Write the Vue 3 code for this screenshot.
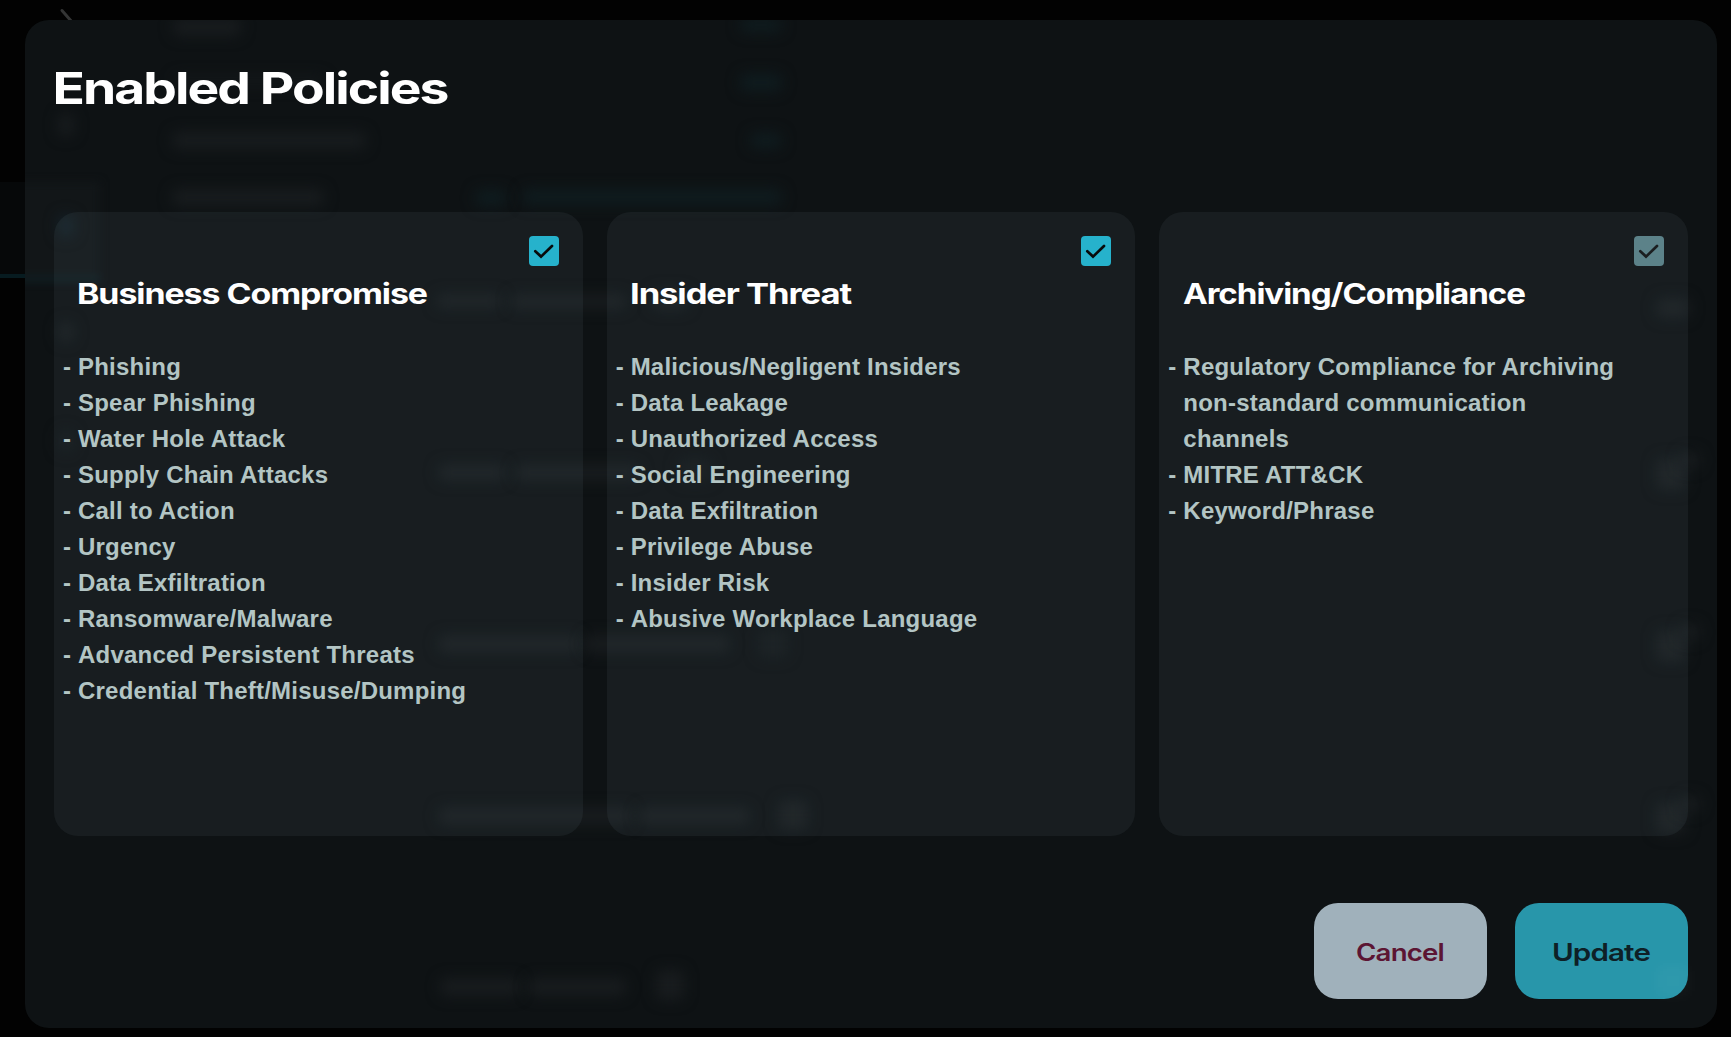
<script setup>
import { ref } from 'vue'

const policies = ref([
  {
    title: 'Business Compromise', x: -1, width: 350, enabled: true, locked: false,
    items: ['Phishing', 'Spear Phishing', 'Water Hole Attack', 'Supply Chain Attacks', 'Call to Action', 'Urgency',
      'Data Exfiltration', 'Ransomware/Malware', 'Advanced Persistent Threats', 'Credential Theft/Misuse/Dumping'],
  },
  {
    title: 'Insider Threat', x: -1, width: 221, enabled: true, locked: false,
    items: ['Malicious/Negligent Insiders', 'Data Leakage', 'Unauthorized Access', 'Social Engineering',
      'Data Exfiltration', 'Privilege Abuse', 'Insider Risk', 'Abusive Workplace Language'],
  },
  {
    title: 'Archiving/Compliance', x: 0, width: 342, enabled: true, locked: true,
    items: ['Regulatory Compliance for Archiving non-standard communication channels', 'MITRE ATT&CK', 'Keyword/Phrase'],
  },
])

// Dimmed page content behind the dialog: [x, y, width, height, tone]
const ghosts = [
  [173, 18, 68, 18, 'grey'], [174, 76, 150, 10, 'dim'],
  [172, 132, 194, 17, 'grey'], [172, 189, 152, 17, 'grey'],
  [740, 18, 42, 14, 'teal'], [740, 74, 42, 17, 'teal'], [750, 133, 32, 15, 'teal'],
  [475, 190, 32, 16, 'teal'], [522, 189, 260, 16, 'teal'],
  [58, 114, 16, 22, 'grey'], [58, 215, 16, 22, 'blue'], [58, 322, 16, 20, 'grey'], [58, 430, 16, 22, 'dim'],
  [436, 294, 66, 14, 'grey'], [510, 294, 117, 15, 'grey'], [652, 290, 36, 20, 'grey'],
  [438, 464, 68, 17, 'grey'], [515, 464, 125, 17, 'grey'], [678, 458, 34, 24, 'dim'],
  [438, 635, 142, 18, 'grey'], [584, 635, 146, 18, 'grey'], [758, 630, 30, 28, 'dim'],
  [438, 807, 194, 18, 'grey'], [638, 807, 112, 18, 'grey'], [778, 800, 30, 30, 'grey'],
  [440, 978, 80, 18, 'grey'], [528, 978, 98, 18, 'grey'], [656, 970, 28, 30, 'grey'],
  [1656, 298, 34, 20, 'grey'],
  [1656, 458, 30, 32, 'grey'], [1680, 452, 20, 16, 'grey'],
  [1656, 630, 30, 32, 'grey'], [1680, 624, 20, 16, 'grey'],
  [1656, 802, 30, 32, 'grey'], [1680, 796, 20, 16, 'grey'],
]
</script>

<template>
  <div class="page">
    <div class="backdrop" aria-hidden="true">
      <div class="nav-active"></div>
      <svg class="chevron" width="20" height="14" viewBox="0 0 20 14"><path d="M3 2.5 L13 14" /></svg>
    </div>
    <section class="dialog">
      <div class="shade" aria-hidden="true">
        <div class="shade-nav"></div>
        <i v-for="(g, i) in ghosts" :key="i" :class="g[4]"
          :style="{ left: g[0] - 25 + 'px', top: g[1] - 20 + 'px', width: g[2] + 'px', height: g[3] + 'px' }"></i>
      </div>
      <h1><svg width="400" height="60"><text x="-1.5" y="42" textLength="395" lengthAdjust="spacingAndGlyphs">Enabled Policies</text></svg></h1>
      <div class="cards">
        <article v-for="p in policies" :key="p.title" class="card">
          <button class="check" :class="{ locked: p.locked }" :disabled="p.locked" @click="p.enabled = !p.enabled">
            <svg v-if="p.enabled" width="30" height="30" viewBox="0 0 30 30"><path d="M6.3 15.2 L12 20.6 L23 10" /></svg>
          </button>
          <h2><svg width="440" height="40"><text :x="p.x" y="30" :textLength="p.width" lengthAdjust="spacingAndGlyphs">{{ p.title }}</text></svg></h2>
          <ul>
            <li v-for="t in p.items" :key="t">{{ t }}</li>
          </ul>
        </article>
      </div>
      <footer>
        <button class="action cancel"><svg width="90" height="30"><text x="0" y="25" textLength="88" lengthAdjust="spacingAndGlyphs">Cancel</text></svg></button>
        <button class="action update"><svg width="99" height="30"><text x="0" y="25" textLength="98" lengthAdjust="spacingAndGlyphs">Update</text></svg></button>
      </footer>
      <i class="ghost-edge"></i>
    </section>
  </div>
</template>

<style>
html, body { margin: 0; background: #020202; }
</style>

<style scoped>
.page {
  position: relative;
  box-sizing: border-box;
  width: 1731px;
  height: 1037px;
  padding: 20px 14px 9px 25px;
  overflow: hidden;
  background: #020202;
  font-family: "Liberation Sans", Arial, sans-serif;
}
.backdrop { position: absolute; inset: 0; }
.nav-active {
  position: absolute;
  left: 0;
  top: 182px;
  width: 100px;
  height: 92px;
  background: #060809;
  border-bottom: 4px solid #071b20;
}
.chevron { position: absolute; left: 59px; top: 8px; }
.chevron path { fill: none; stroke: #343535; stroke-width: 3; stroke-linecap: round; }
.dialog {
  position: relative;
  box-sizing: border-box;
  height: 1008px;
  padding: 42px 29px 29px;
  border-radius: 24px;
  background: #0e1214;
  overflow: hidden;
  display: flex;
  flex-direction: column;
}
.shade { position: absolute; inset: 0; }
.shade i { position: absolute; border-radius: 6px; filter: blur(7px); }
.shade .grey { background: #181c1e; }
.shade .dim { background: #14181a; }
.shade .teal { background: #0f1c1f; }
.shade .blue { background: #142129; }
.shade-nav {
  position: absolute;
  left: -10px;
  top: 162px;
  width: 85px;
  height: 95px;
  background: #121618;
  border-bottom: 4px solid #10252a;
  filter: blur(4px);
}
.ghost-edge {
  position: absolute;
  right: 28px;
  bottom: 32px;
  width: 32px;
  height: 30px;
  background: rgba(255, 255, 255, 0.03);
  filter: blur(7px);
}
h1, h2 { margin: 0; }
h1 { position: relative; height: 150px; }
svg { display: block; overflow: visible; }
text { font-family: Inter, sans-serif; }
h1 text { font-size: 44px; font-weight: 650; letter-spacing: -1.6px; fill: #fff; }
h2 text { font-size: 28.8px; font-weight: 650; letter-spacing: -0.9px; fill: #fff; }
.cards {
  position: relative;
  display: grid;
  grid-template-columns: repeat(3, 1fr);
  gap: 24px;
  height: 624px;
}
.card {
  box-sizing: border-box;
  display: flex;
  flex-direction: column;
  padding: 24px;
  border-radius: 24px;
  background: rgba(155, 187, 200, 0.07);
}
.check {
  align-self: flex-end;
  width: 30px;
  height: 30px;
  padding: 0;
  border: 0;
  border-radius: 4px;
  background: #26b2cc;
}
.check path { fill: none; stroke: #080b0c; stroke-width: 2.7; stroke-linecap: round; stroke-linejoin: miter; }
.check.locked { background: #5c8289; }
.check.locked path { stroke: #1b1e20; }
h2 { height: 40px; margin-top: 8px; }
ul {
  margin: 35px 30px 0 0;
  padding: 0;
  list-style: none;
  color: #b3c5c4;
  font-size: 24px;
  font-weight: 700;
  line-height: 36px;
  letter-spacing: 0.22px;
}
li { position: relative; }
li::before { content: "-"; position: absolute; left: -15px; }
footer { position: relative; display: flex; justify-content: flex-end; gap: 28px; margin-top: 67px; }
.action {
  display: flex;
  align-items: center;
  justify-content: center;
  width: 173px;
  height: 96px;
  padding: 0;
  border: 0;
  border-radius: 24px;
}
.action text { font-size: 24px; font-weight: 600; letter-spacing: -0.7px; }
.cancel { background: #a0b1bb; }
.cancel text { fill: #5c1533; }
.update { background: #2896aa; }
.update text { fill: #0e2026; }
</style>
